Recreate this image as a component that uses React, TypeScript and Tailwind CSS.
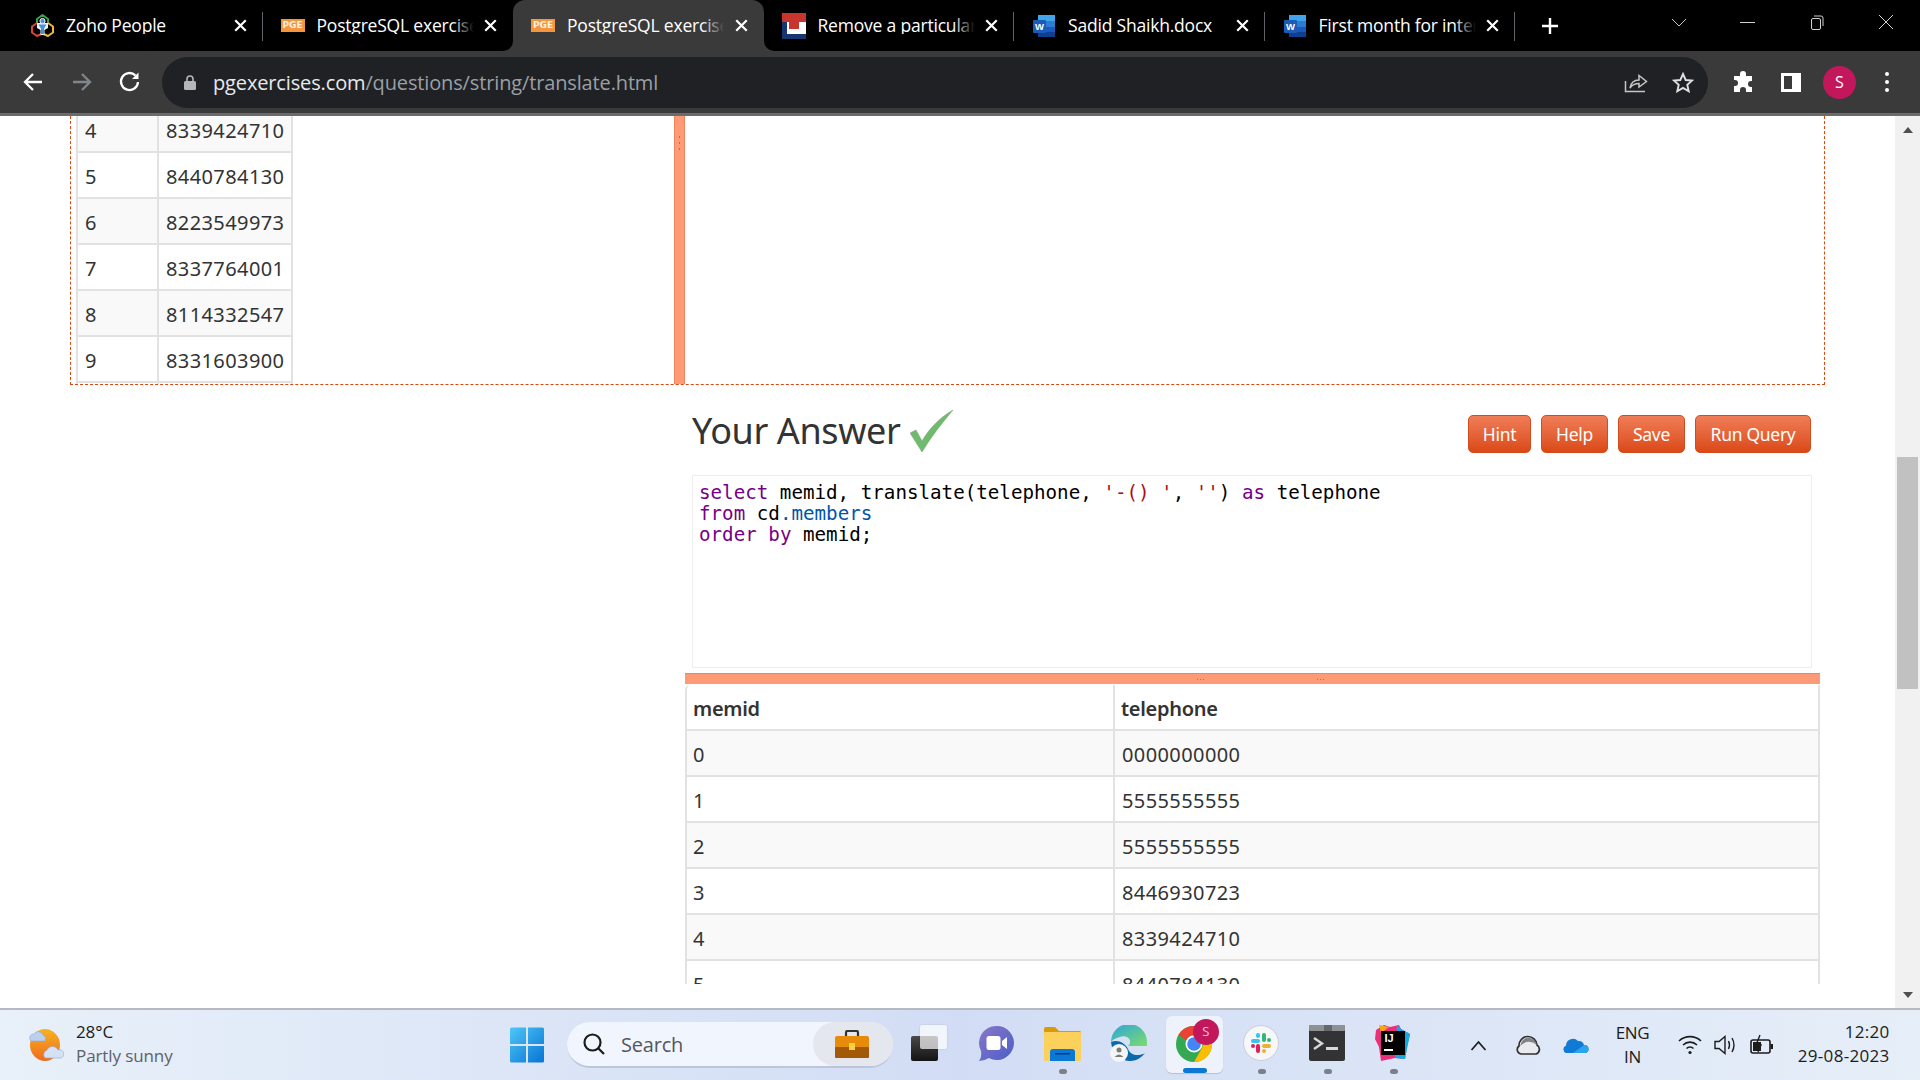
import React from "react";

const UI = "font-['Open_Sans',sans-serif]";
const PAGE = "font-['Noto_Sans',sans-serif]";

function ZohoIcon() {
  return (
    <svg width="25" height="25" viewBox="0 0 25 25" fill="none" strokeWidth="2">
      <path d="M7 10 L7 6 L12.5 2 L18 6 L18 10" stroke="#3fa14a" strokeLinejoin="round" />
      <path d="M7 10 L2 13.5 L2 19.5 L7 23 L11.5 21" stroke="#e2423a" strokeLinejoin="round" />
      <path d="M18 10 L23 13.5 L23 19.5 L18 23 L13.5 21" stroke="#f4b733" strokeLinejoin="round" />
      <path d="M7 10 H18 V15 L14.5 17 V22 H10.5 V17 L7 15 Z" fill="#eef3f8" stroke="none" />
      <circle cx="12.5" cy="8" r="2.6" fill="#4a90d9" stroke="#eef3f8" strokeWidth="1" />
      <path d="M8.5 11.5 L16.5 11.5 L14 15.5 L14 21 L11 21 L11 15.5 Z" fill="#4a90d9" />
    </svg>
  );
}

function PgeIcon() {
  return (
    <div className="flex h-[13px] w-[24px] items-center justify-center bg-[#f5963f] font-['DejaVu_Sans',sans-serif] text-[9px] leading-none font-bold text-[#fff0df]">
      PGE
    </div>
  );
}

function WordIcon() {
  return (
    <svg width="24" height="24" viewBox="0 0 24 24">
      <rect x="6" y="1" width="17" height="22" rx="1" fill="#2b7cd3" />
      <rect x="6" y="1" width="17" height="6" fill="#41a5ee" />
      <rect x="6" y="13" width="17" height="5" fill="#185abd" />
      <rect x="6" y="18" width="17" height="5" fill="#103f91" />
      <rect x="1" y="6" width="13" height="13" rx="1" fill="#1a5cb8" />
      <text x="7.5" y="16" textAnchor="middle" fontSize="9.5" fontWeight="700" fill="#fff" fontFamily="Liberation Sans">W</text>
    </svg>
  );
}

function RemoveIcon() {
  return (
    <svg width="24" height="26" viewBox="0 0 24 26">
      <rect x="0" y="0" width="24" height="26" fill="#fff" />
      <rect x="0" y="0" width="24" height="9" fill="#c7352e" />
      <rect x="0" y="9" width="5" height="17" fill="#19356f" />
      <rect x="0" y="21" width="24" height="5" fill="#19356f" />
      <rect x="7" y="9" width="10" height="7" fill="#c7352e" />
    </svg>
  );
}

function CloseX() {
  return (
    <svg width="13" height="13" viewBox="0 0 13 13" stroke="#fff" strokeWidth="2.2" strokeLinecap="square">
      <path d="M2 2 L11 11 M11 2 L2 11" />
    </svg>
  );
}

function Tab({
  icon,
  title,
  active,
  divider,
  fade,
}: {
  icon: React.ReactNode;
  title: string;
  active?: boolean;
  divider?: boolean;
  fade?: boolean;
}) {
  return (
    <div
      className={
        "relative flex h-[51px] w-[250.5px] shrink-0 items-center " +
        (active ? "rounded-t-[12px] bg-[#3a3a3a]" : "")
      }
    >
      {active && (
        <>
          <div className="absolute bottom-0 -left-[10px] h-[10px] w-[10px] bg-[#3a3a3a]">
            <div className="h-full w-full rounded-br-[10px] bg-black" />
          </div>
          <div className="absolute -right-[10px] bottom-0 h-[10px] w-[10px] bg-[#3a3a3a]">
            <div className="h-full w-full rounded-bl-[10px] bg-black" />
          </div>
        </>
      )}
      <div className="flex w-[54px] shrink-0 justify-center pl-[6px]">{icon}</div>
      <div className="relative w-[157px] shrink-0 overflow-hidden text-[17.5px] leading-none tracking-[-0.2px] whitespace-nowrap text-white">
        {title}
        {fade && (
          <div
            className={
              "absolute top-0 right-0 h-full w-[22px] bg-gradient-to-r from-transparent " +
              (active ? "to-[#3a3a3a]" : "to-black")
            }
          />
        )}
      </div>
      <div className="flex w-[34px] shrink-0 justify-center">
        <CloseX />
      </div>
      {divider && <div className="absolute top-[12px] right-0 h-[29px] w-px bg-[#5f6368]" />}
    </div>
  );
}

function TabStrip() {
  return (
    <div className={"flex h-[51px] items-start bg-black pl-[12px] " + UI}>
      <Tab icon={<ZohoIcon />} title="Zoho People" divider />
      <Tab icon={<PgeIcon />} title="PostgreSQL exercises" fade />
      <Tab icon={<PgeIcon />} title="PostgreSQL exercises" fade active />
      <Tab icon={<RemoveIcon />} title="Remove a particular" fade divider />
      <Tab icon={<WordIcon />} title="Sadid Shaikh.docx" divider />
      <Tab icon={<WordIcon />} title="First month for intern" fade divider />
      <div className="ml-[22.5px] flex h-[51px] w-[24px] items-center justify-center">
        <svg width="18" height="18" viewBox="0 0 18 18" stroke="#fff" strokeWidth="2.4">
          <path d="M9 1 V17 M1 9 H17" />
        </svg>
      </div>
      <div className="ml-[97px] flex h-[44px] w-[40px] items-center justify-center">
        <svg width="16" height="9" viewBox="0 0 16 9" stroke="#c6c6c6" fill="none" strokeWidth="1">
          <path d="M1 1 L8 8 L15 1" />
        </svg>
      </div>
      <div className="ml-[29px] flex h-[44px] w-[40px] items-center justify-center">
        <div className="h-px w-[15px] bg-[#d0d0d0]" />
      </div>
      <div className="ml-[29px] flex h-[44px] w-[40px] items-center justify-center">
        <svg width="14" height="15" viewBox="0 0 14 15" stroke="#d0d0d0" fill="none" strokeWidth="1">
          <rect x="1.5" y="3.5" width="9" height="11" rx="1.5" />
          <path d="M4 1 H11 Q13 1 13 3 V11" />
        </svg>
      </div>
      <div className="ml-[29px] flex h-[44px] w-[40px] items-center justify-center">
        <svg width="16" height="16" viewBox="0 0 16 16" stroke="#d0d0d0" fill="none" strokeWidth="1">
          <path d="M1 1 L15 15 M15 1 L1 15" />
        </svg>
      </div>
    </div>
  );
}

function Toolbar() {
  return (
    <div className={"flex h-[65px] items-start border-b-[3px] border-[#6b6b6b] bg-[#3a3a3a] " + UI}>
      <div className="flex h-[62px] w-[162px] shrink-0 items-center pl-[22px]">
        <svg width="22" height="20" viewBox="0 0 22 20" fill="none" stroke="#fff" strokeWidth="2.3">
          <path d="M20 10 H3 M11 2 L3 10 L11 18" />
        </svg>
        <svg className="ml-[27px]" width="22" height="20" viewBox="0 0 22 20" fill="none" stroke="#80868b" strokeWidth="2.3">
          <path d="M2 10 H19 M11 2 L19 10 L11 18" />
        </svg>
        <svg className="ml-[25px]" width="24" height="24" viewBox="0 0 24 24" fill="none" stroke="#fff" strokeWidth="2.3">
          <path d="M20 12 A8.5 8.5 0 1 1 17.5 5.5" />
          <path d="M20.5 2.5 V9 H14 Z" fill="#fff" stroke="none" />
        </svg>
      </div>
      <div className="mt-[6px] flex h-[51px] w-[1546px] shrink-0 items-center rounded-full bg-[#202124] pl-[22px]">
        <svg width="12" height="15" viewBox="0 0 12 15" fill="#b4b6b9">
          <rect x="0" y="6" width="12" height="9" rx="1.5" />
          <path d="M3 6 V4 A3 3 0 0 1 9 4 V6" fill="none" stroke="#b4b6b9" strokeWidth="1.6" />
        </svg>
        <div className="ml-[17px] text-[20px] leading-none tracking-[-0.14px] whitespace-nowrap text-[#e8eaed]">
          pgexercises.com<span className="text-[#9aa0a6]">/questions/string/translate.html</span>
        </div>
        <div className="ml-auto flex items-center pr-[14px]">
          <svg width="24" height="20" viewBox="0 0 24 20" fill="none" stroke="#c4c7c5" strokeWidth="1.5">
            <path d="M1.5 8 V18.5 H21" />
            <path d="M6 15 C7 9 11 7 15 7 V2.5 L22.5 8.5 L15 14 V10.5 C11 10.5 8 12 6 15 Z" />
          </svg>
          <svg className="ml-[24px]" width="22" height="21" viewBox="0 0 22 21" fill="none" stroke="#e0e0e0" strokeWidth="1.9">
            <path d="M11 2 L13.7 8 L20 8.6 L15.3 12.9 L16.7 19.2 L11 15.9 L5.3 19.2 L6.7 12.9 L2 8.6 L8.3 8 Z" />
          </svg>
        </div>
      </div>
      <div className="flex h-[62px] flex-1 items-center">
        <svg className="ml-[24px]" width="23" height="22" viewBox="0 0 23 22" fill="#fff">
          <path d="M8 3 A3 3 0 0 1 14 3 V5 H20 V10 H19 A3 3 0 0 0 19 16 H20 V21 H14 V19 A3 3 0 0 0 8 19 V21 H2 V15 H3 A3 3 0 0 0 3 9 H2 V5 H8 Z" />
        </svg>
        <div className="ml-[26px] h-[19px] w-[20px] border-[3px] border-r-[9px] border-white" />
        <div className="ml-[22px] flex h-[33px] w-[33px] items-center justify-center rounded-full bg-[#c2185b] text-[16px] text-white">S</div>
        <div className="ml-[29px] flex flex-col gap-[4px]">
          <div className="h-[4px] w-[4px] rounded-full bg-white" />
          <div className="h-[4px] w-[4px] rounded-full bg-white" />
          <div className="h-[4px] w-[4px] rounded-full bg-white" />
        </div>
      </div>
    </div>
  );
}

function Row({
  a,
  b,
  shaded,
  firstClass,
}: {
  a: string;
  b: string;
  shaded: boolean;
  firstClass: string;
}) {
  return (
    <div className={"flex h-[46px] shrink-0 border-b-2 border-[#e2e2e2] pt-[4px] " + (shaded ? "bg-[#f9f9f9]" : "bg-white")}>
      <div className={"-mt-[4px] flex items-center border-r-2 border-[#e2e2e2] pt-[4px] " + firstClass}>{a}</div>
      <div className="flex flex-1 items-center pl-[7px]">{b}</div>
    </div>
  );
}

const leftRows = [
  ["4", "8339424710"],
  ["5", "8440784130"],
  ["6", "8223549973"],
  ["7", "8337764001"],
  ["8", "8114332547"],
  ["9", "8331603900"],
];

const bottomRows = [
  ["0", "0000000000"],
  ["1", "5555555555"],
  ["2", "5555555555"],
  ["3", "8446930723"],
  ["4", "8339424710"],
  ["5", "8440784130"],
];

function Dots() {
  return (
    <div className="flex gap-[2px]">
      <div className="h-px w-px bg-[#c76a48]" />
      <div className="h-px w-px bg-[#c76a48]" />
      <div className="h-px w-px bg-[#c76a48]" />
    </div>
  );
}

function TopPanel() {
  return (
    <div className="mr-[70px] ml-[70px] flex h-[269px] shrink-0 border-r border-b border-l border-dashed border-[#d9480f]">
      <div className="h-full w-[603px] shrink-0 overflow-hidden pl-[5px]">
        <div className="-mt-[9px] flex w-[217px] flex-col border-x-2 border-[#e2e2e2] text-[20px] tracking-[0.4px] text-[#333]">
          {leftRows.map((r, i) => (
            <Row key={r[0]} a={r[0]} b={r[1]} shaded={i % 2 === 0} firstClass="w-[81px] pl-[7px]" />
          ))}
          <div className="flex h-[4px] shrink-0">
            <div className="h-full w-[81px] border-r-2 border-[#e2e2e2]" />
          </div>
        </div>
      </div>
      <div className="flex h-full w-[11px] shrink-0 flex-col items-center border-x border-[#f0845c] bg-[#ff9a76] pt-[20px]">
        <div className="flex flex-col gap-[4px]">
          <div className="h-[2px] w-px bg-[#c76a48]" />
          <div className="h-[2px] w-px bg-[#c76a48]" />
          <div className="h-[2px] w-px bg-[#c76a48]" />
        </div>
      </div>
      <div className="flex-1" />
    </div>
  );
}

function Btn({ children, w }: { children: string; w: string }) {
  return (
    <button
      className={
        "flex h-[38px] items-center justify-center rounded-[5px] border border-[#cf4d1e] bg-gradient-to-b from-[#ef7d56] to-[#db4813] text-[17.5px] tracking-[-0.3px] text-white " +
        w
      }
    >
      {children}
    </button>
  );
}

function AnswerPanel() {
  return (
    <div className="mr-[75px] ml-[685px] flex flex-col">
      <div className="flex h-[90px] items-start pr-[9px] pl-[7px]">
        <div className="mt-[22px] flex items-center">
          <div className="text-[36px] leading-[48px] tracking-[-0.4px] text-[#333]">Your Answer</div>
          <svg className="ml-[10px]" width="44" height="43" viewBox="0 0 44 43">
            <path d="M0 23 L6 20 L12 31 C20 17 31 7 43 0 C32 13 21 27 12 42 Z" fill="#6dbb6b" stroke="#8aa58a" strokeWidth="0.6" />
          </svg>
        </div>
        <div className="mt-[30px] ml-auto flex gap-[10px]">
          <Btn w="w-[63px]">Hint</Btn>
          <Btn w="w-[67px]">Help</Btn>
          <Btn w="w-[67px]">Save</Btn>
          <Btn w="w-[116px]">Run Query</Btn>
        </div>
      </div>
      <div className="mr-[8px] ml-[7px] h-[193px] border border-[#eeeeee] pt-[6px] pl-[6px] font-['DejaVu_Sans_Mono',monospace] text-[19.2px] leading-[21px] whitespace-pre text-black">
        <div>
          <span className="text-[#770088]">select</span> memid, translate(telephone, <span className="text-[#aa1111]">'-() '</span>, <span className="text-[#aa1111]">''</span>) <span className="text-[#770088]">as</span> telephone
        </div>
        <div>
          <span className="text-[#770088]">from</span> cd<span className="text-[#0055aa]">.members</span>
        </div>
        <div>
          <span className="text-[#770088]">order</span> <span className="text-[#770088]">by</span> memid;
        </div>
      </div>
      <div className="mt-[5px] flex h-[11px] shrink-0 items-center gap-[113px] border-t border-[#e58a66] bg-[#ff9a76] pl-[512px]">
        <Dots />
        <Dots />
      </div>
      <div className="h-[300px] overflow-hidden pt-[1px]">
        <div className="flex flex-col rounded-tl-[5px] border-x-2 border-[#e2e2e2] text-[20px] tracking-[0.4px] text-[#333]">
          <div className="flex h-[46px] shrink-0 border-b-2 border-[#e2e2e2] font-semibold tracking-[-0.3px]">
            <div className="flex w-[428px] items-center border-r-2 border-[#e2e2e2] pt-[4px] pl-[6px]">memid</div>
            <div className="flex flex-1 items-center pt-[4px] pl-[6px]">telephone</div>
          </div>
          {bottomRows.map((r, i) => (
            <Row key={r[0]} a={r[0]} b={r[1]} shaded={i % 2 === 0} firstClass="w-[428px] pl-[6px]" />
          ))}
        </div>
      </div>
    </div>
  );
}

function Scrollbar() {
  return (
    <div className="flex w-[25px] shrink-0 flex-col items-center bg-[#f1f1f1]">
      <div className="flex h-[27px] shrink-0 items-center justify-center">
        <div className="h-0 w-0 border-x-[5px] border-b-[6px] border-x-transparent border-b-[#505050]" />
      </div>
      <div className="mt-[314px] h-[232px] w-[21px] shrink-0 bg-[#c1c1c1]" />
      <div className="mt-auto flex h-[27px] shrink-0 items-center justify-center">
        <div className="h-0 w-0 border-x-[5px] border-t-[6px] border-x-transparent border-t-[#505050]" />
      </div>
    </div>
  );
}

function TaskSlot({ children, dot, active }: { children: React.ReactNode; dot?: boolean; active?: boolean }) {
  return (
    <div className="relative flex h-[70px] w-[66.2px] shrink-0 items-center justify-center">
      {active && (
        <div className="absolute top-[6px] left-[3px] h-[57px] w-[57px] rounded-[6px] bg-[#eef2fb] shadow-[0_1px_1px_rgba(0,0,0,0.15)]" />
      )}
      <div className="relative -mt-[4px] -ml-[2px]">{children}</div>
      {dot && <div className="absolute top-[59px] left-[29px] h-[5px] w-[8px] rounded-full bg-[#7d8088]" />}
      {active && <div className="absolute top-[58px] left-[20px] h-[5px] w-[24px] rounded-full bg-[#0a78d4]" />}
    </div>
  );
}

function Taskbar() {
  return (
    <div className={"flex h-[72px] shrink-0 items-center border-t-2 border-[#b6b9bf] bg-gradient-to-r from-[#e8f0f9] via-[#d2ddf5] to-[#e6eef8] " + UI}>
      <div className="flex w-[494px] shrink-0 items-center pl-[28px]">
        <svg width="36" height="34" viewBox="0 0 36 34">
          <defs>
            <linearGradient id="sun" x1="0" y1="0" x2="0" y2="1">
              <stop offset="0" stopColor="#f7b322" />
              <stop offset="1" stopColor="#ef6a1d" />
            </linearGradient>
          </defs>
          <ellipse cx="17" cy="17" rx="15" ry="16" fill="url(#sun)" />
          <path d="M3 13 A4 4 0 0 1 6 6 A5 5 0 0 1 15 7 A4 4 0 0 1 17 13 Z" fill="#bcd0ee" stroke="#90aad2" strokeWidth="0.6" />
          <path d="M17 30 A5 5 0 0 1 19 22 A6 6 0 0 1 30 22 A4 4 0 0 1 33 30 Z" fill="#d5e2f6" stroke="#90aad2" strokeWidth="0.6" />
        </svg>
        <div className="-mt-[2px] ml-[12px] flex flex-col text-[17px] leading-[24px] tracking-[-0.1px]">
          <div className="text-[#1c1c1c]">28°C</div>
          <div className="text-[#5f6066]">Partly sunny</div>
        </div>
      </div>
      <div className="flex w-[66px] shrink-0 justify-center">
        <svg width="36" height="36" viewBox="0 0 36 36">
          <defs>
            <linearGradient id="win" x1="0" y1="0" x2="1" y2="1">
              <stop offset="0" stopColor="#4fc6f7" />
              <stop offset="1" stopColor="#0774d4" />
            </linearGradient>
          </defs>
          <path d="M1 2 Q1 0.5 2.5 0.5 H17 V17 H1 Z M19 0.5 H33.5 Q35 0.5 35 2 V17 H19 Z M1 19 H17 V35.5 H2.5 Q1 35.5 1 34 Z M19 19 H35 V34 Q35 35.5 33.5 35.5 H19 Z" fill="url(#win)" />
        </svg>
      </div>
      <div className="ml-[7px] flex h-[46px] w-[326px] shrink-0 items-center rounded-full border-b-2 border-[#bcc5d9] bg-[#f1f5fd] pl-[15px]">
        <svg width="24" height="24" viewBox="0 0 24 24" fill="none" stroke="#1c1c1c" strokeWidth="2.2">
          <circle cx="10.5" cy="10.5" r="8" />
          <path d="M16.5 16.5 L22 22" />
        </svg>
        <div className="mt-[1px] ml-[15px] text-[20px] tracking-[-0.2px] text-[#55575c]">Search</div>
        <div className="ml-auto flex h-[44px] w-[80px] items-center justify-center rounded-full bg-[#e4e7ee] pr-[2px]">
          <svg width="34" height="28" viewBox="0 0 34 28">
            <path d="M11 6 V2.5 Q11 1 12.5 1 H21.5 Q23 1 23 2.5 V6" fill="none" stroke="#333" strokeWidth="2.2" />
            <rect x="0" y="6" width="34" height="22" rx="2" fill="#e88a0a" />
            <rect x="0" y="17" width="34" height="11" rx="1" fill="#a35a08" />
            <rect x="14" y="13" width="6" height="7" fill="#f6d242" />
          </svg>
        </div>
      </div>
      <div className="ml-[5px] flex shrink-0">
        <TaskSlot>
          <div className="relative -ml-[2px] h-[36px] w-[36px]">
            <div className="absolute bottom-0 left-0 h-[25px] w-[27px] rounded-[2px] bg-gradient-to-b from-[#4a4a4a] to-[#141414]" />
            <div className="absolute top-0 right-0 h-[24px] w-[27px] rounded-[2px] bg-[#ffffffb0] shadow-[0_0_2px_rgba(0,0,0,0.15)]" />
          </div>
        </TaskSlot>
        <TaskSlot>
          <svg width="36" height="36" viewBox="0 0 36 36">
            <defs>
              <linearGradient id="meet" x1="0" y1="0" x2="1" y2="1">
                <stop offset="0" stopColor="#8a76c9" />
                <stop offset="1" stopColor="#4a5fc6" />
              </linearGradient>
            </defs>
            <path d="M18 1 A17 17 0 1 1 11 33 Q6 36 1 36 Q4 32 3 26 A17 17 0 0 1 18 1 Z" fill="url(#meet)" />
            <rect x="8.5" y="11" width="14" height="14" rx="2.5" fill="#fff" />
            <path d="M24 16 L29 12 V24 L24 20 Z" fill="#fff" />
          </svg>
        </TaskSlot>
        <TaskSlot dot>
          <svg width="37" height="35" viewBox="0 0 37 35">
            <path d="M0 3 Q0 1 2 1 H11 L15 5 H36 Q37 5 37 7 V12 H0 Z" fill="#d99a0b" />
            <rect x="0" y="6" width="37" height="29" rx="1" fill="#fbd15b" />
            <path d="M6 35 V26 Q6 23 9 23 H28 Q31 23 31 26 V35 Z" fill="#0a78d4" />
            <rect x="11" y="27" width="15" height="1.5" fill="#063f78" />
          </svg>
        </TaskSlot>
        <TaskSlot>
          <svg width="37" height="37" viewBox="0 0 37 37">
            <defs>
              <linearGradient id="edge" x1="0" y1="0" x2="1" y2="1">
                <stop offset="0" stopColor="#2ba4dd" />
                <stop offset="1" stopColor="#7ddc6b" />
              </linearGradient>
            </defs>
            <path d="M1 17 A18 18 0 0 1 37 17 V21 H18 C24 15 16 9 10 12 Q3 14 1 17 Z" fill="url(#edge)" />
            <path d="M1 17 C2 30 14 37 21 36 Q30 35 35 28 C28 32 20 30 18 24 C15 18 8 14 1 17 Z" fill="#0c6aab" />
            <circle cx="9" cy="28" r="9" fill="#f4f5f7" />
            <circle cx="9" cy="25" r="2.5" fill="#7a7a7a" />
            <path d="M4.5 32 Q9 27 13.5 32 Z" fill="#7a7a7a" />
          </svg>
        </TaskSlot>
        <TaskSlot active>
          <div className="relative ml-[4px] h-[38px] w-[44px]">
            <svg className="absolute top-[2px] left-[1px]" width="36" height="36" viewBox="0 0 36 36">
              <circle cx="18" cy="18" r="18" fill="#34a853" />
              <path d="M18 0 A18 18 0 0 1 33.6 9 L18 9 A9 9 0 0 0 10 14 L2.4 9 A18 18 0 0 1 18 0 Z" fill="#ea4335" />
              <path d="M33.6 9 A18 18 0 0 1 18 36 L26 22 A9 9 0 0 0 18 9 Z" fill="#fbbc04" />
              <circle cx="18" cy="18" r="8.5" fill="#fff" />
              <circle cx="18" cy="18" r="6.8" fill="#4285f4" />
            </svg>
            <div className="absolute -top-[5px] right-[0px] flex h-[26px] w-[26px] items-center justify-center rounded-full bg-[#c2185b] text-[13px] text-[#f5c6d8]">S</div>
          </div>
        </TaskSlot>
        <TaskSlot dot>
          <div className="relative flex h-[36px] w-[36px] items-center justify-center rounded-full border border-[#c9cdd6] bg-[#f6f7f9]">
            <svg width="24" height="24" viewBox="0 0 24 24">
              <rect x="2" y="8" width="9" height="4" rx="2" fill="#36c5f0" />
              <rect x="7" y="2" width="4" height="5" rx="2" fill="#36c5f0" />
              <rect x="13" y="2" width="4" height="9" rx="2" fill="#2eb67d" />
              <rect x="18" y="7" width="4" height="4" rx="2" fill="#2eb67d" />
              <rect x="13" y="13" width="9" height="4" rx="2" fill="#ecb22e" />
              <rect x="13" y="18" width="4" height="4" rx="2" fill="#ecb22e" />
              <rect x="7" y="13" width="4" height="9" rx="2" fill="#e01e5a" />
              <rect x="2" y="13" width="4" height="4" rx="2" fill="#e01e5a" />
            </svg>
          </div>
        </TaskSlot>
        <TaskSlot dot>
          <svg width="36" height="36" viewBox="0 0 36 36">
            <rect x="0" y="0" width="36" height="36" rx="2" fill="#333336" />
            <rect x="0" y="0" width="36" height="6" rx="1" fill="#8f9094" />
            <rect x="15" y="0" width="8" height="6" fill="#66676a" />
            <path d="M5 13 L13 18.5 L5 24" fill="none" stroke="#d8d8d8" strokeWidth="2.4" />
            <rect x="17" y="22" width="12" height="3" fill="#d8d8d8" />
          </svg>
        </TaskSlot>
        <TaskSlot dot>
          <div className="relative h-[36px] w-[36px]">
            <svg className="absolute top-0 left-0" width="36" height="36" viewBox="0 0 36 36">
              <path d="M1 5 L9 0 L15 2 L24 0 L26 4 L35 9 L32 22 L30 34 L20 33 L6 36 L4 22 L0 14 Z" fill="#ea2f7b" />
              <path d="M22 0 L26 4 L35 9 L30 34 L20 33 Z" fill="#14a9e4" />
              <path d="M4 0 L14 2 L6 8 Z" fill="#f7a41d" />
            </svg>
            <div className="absolute top-[6px] left-[6px] flex h-[24px] w-[24px] flex-col bg-black pt-[1px] pl-[3px] font-['Liberation_Sans',sans-serif] text-[11px] leading-[12px] font-bold text-white">
              IJ
              <div className="mt-[5px] h-[2px] w-[9px] bg-white" />
            </div>
          </div>
        </TaskSlot>
      </div>
      <div className="ml-[42px] flex shrink-0 items-center">
        <svg width="17" height="11" viewBox="0 0 17 11" fill="none" stroke="#1f1f1f" strokeWidth="1.8">
          <path d="M1.5 10 L8.5 2 L15.5 10" />
        </svg>
        <svg className="ml-[29px]" width="25" height="24" viewBox="0 0 25 24">
          <path d="M5 21 A4.5 4.5 0 0 1 3 13 A9 9 0 0 1 21 12 A5 5 0 0 1 20 21 Z" fill="#e8eaed" stroke="#303030" strokeWidth="1.7" />
          <path d="M4 13 Q12 5 21 12 L19 8 Q12 1 6 8 Z" fill="#808387" />
        </svg>
        <svg className="ml-[22px]" width="26" height="18" viewBox="0 0 26 18">
          <path d="M3 17 A4 4 0 0 1 3 9.5 A7 7 0 0 1 15 5 A5.5 5.5 0 0 1 21 9 A4 4 0 0 1 22 17 Z" fill="#0f7bd7" />
          <path d="M10 17 L21 9 A4 4 0 0 1 22 17 Z" fill="#2aa4ec" />
        </svg>
        <div className="ml-[26px] flex w-[36px] flex-col items-center text-[17px] leading-[24px] tracking-[-0.3px] text-[#1c1c1c]">
          <div>ENG</div>
          <div>IN</div>
        </div>
        <svg className="ml-[27px]" width="24" height="20" viewBox="0 0 24 20" fill="none" stroke="#1c1c1c" strokeWidth="1.6">
          <path d="M1 6 A16 16 0 0 1 23 6 M5 10 A10 10 0 0 1 19 10 M8.5 13.5 A5 5 0 0 1 15.5 13.5" />
          <circle cx="12" cy="17.5" r="1.6" fill="#1c1c1c" stroke="none" />
        </svg>
        <svg className="ml-[12px]" width="24" height="22" viewBox="0 0 24 22" fill="none" stroke="#1c1c1c" strokeWidth="1.4">
          <path d="M1 7.5 H5 L11 2.5 V19.5 L5 14.5 H1 Z" />
          <path d="M14.5 7 Q16.5 11 14.5 15 M18 4 Q22 11 18 18" />
        </svg>
        <svg className="ml-[12px]" width="24" height="22" viewBox="0 0 24 22" fill="none" stroke="#1c1c1c" strokeWidth="1.6">
          <rect x="1" y="6" width="19" height="13" rx="2" />
          <rect x="20.5" y="10" width="2.5" height="5" fill="#1c1c1c" stroke="none" />
          <path d="M10 1 L6 11 H11 L8 18" strokeWidth="1.4" />
          <rect x="3" y="8" width="8" height="9" fill="#1c1c1c" stroke="none" />
        </svg>
        <div className="-mt-[2px] ml-[9px] flex w-[107px] flex-col items-end text-[17px] leading-[24px] tracking-[0.3px] text-[#1c1c1c]">
          <div>12:20</div>
          <div>29-08-2023</div>
        </div>
      </div>
    </div>
  );
}

export default function App() {
  return (
    <div className="flex h-[1080px] w-[1920px] flex-col overflow-hidden bg-white">
      <TabStrip />
      <Toolbar />
      <div className="flex min-h-0 flex-1">
        <div className={"min-w-0 flex-1 overflow-hidden bg-white " + PAGE}>
          <TopPanel />
          <AnswerPanel />
        </div>
        <Scrollbar />
      </div>
      <Taskbar />
    </div>
  );
}
